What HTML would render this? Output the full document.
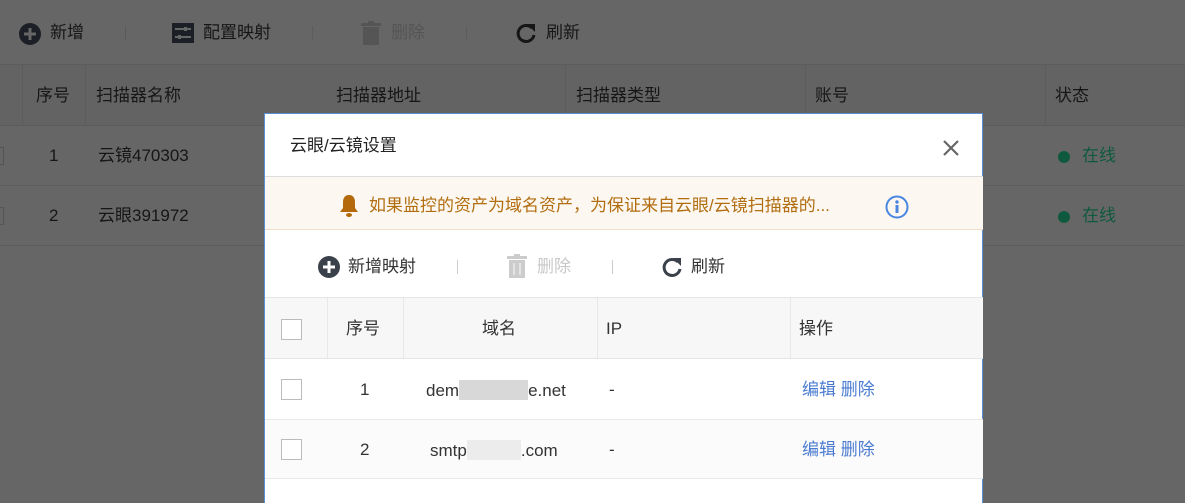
<!DOCTYPE html>
<html><head><meta charset="utf-8"><style>
*{box-sizing:border-box;margin:0;padding:0}
body{width:1185px;height:495px;overflow:hidden;position:relative;background:#666;font-family:"Liberation Sans","Noto Sans CJK SC",sans-serif;font-size:17px;color:#161616}
.a{position:absolute;white-space:nowrap;line-height:20px}
.ln{position:absolute;background:#5c5c5c}
.m{position:absolute;left:264px;top:113px;width:719px;height:390px;background:#fff;border:1px solid #5a8fd8;border-bottom:none;color:#333}
.cb{position:absolute;width:21px;height:21px;border:1px solid #bbb;background:#fff}
.lk{color:#4a7bd0}
</style></head><body>
<svg class="a" style="left:18px;top:22px" width="24" height="24" viewBox="0 0 24 24"><circle cx="12" cy="12" r="11" fill="#1c1f26"/><path d="M12 6v12M6 12h12" stroke="#666" stroke-width="3"/></svg>
<div class="a" style="left:50px;top:23px">新增</div>
<div class="ln" style="left:125px;top:26px;width:1px;height:14px;background:#5a5a5a"></div>
<svg class="a" style="left:172px;top:23px" width="22" height="20" viewBox="0 0 22 20"><rect width="22" height="20" fill="#1c1f26"/><path d="M3 6h16M3 14h16" stroke="#666" stroke-width="2"/><rect x="12" y="4" width="3" height="4" fill="#666"/><rect x="6" y="12" width="3" height="4" fill="#666"/></svg>
<div class="a" style="left:203px;top:23px">配置映射</div>
<div class="ln" style="left:312px;top:26px;width:1px;height:14px"></div>
<svg class="a" style="left:360px;top:21px" width="22" height="24" viewBox="0 0 22 24"><rect x="1" y="2" width="20" height="3" fill="#555"/><rect x="8" y="0" width="6" height="3" fill="#555"/><rect x="3" y="6" width="16" height="18" fill="#555"/></svg>
<div class="a" style="left:391px;top:23px;color:#555">删除</div>
<div class="ln" style="left:466px;top:26px;width:1px;height:14px"></div>
<svg class="a" style="left:515px;top:22px" width="22" height="22" viewBox="0 0 22 22"><path d="M17 6A8 8 0 1 0 19 13" fill="none" stroke="#161616" stroke-width="3"/><path d="M12 2L20 2L20 10Z" fill="#161616"/></svg>
<div class="a" style="left:546px;top:23px">刷新</div>
<div class="a" style="left:0;top:64px;width:1185px;height:62px;background:#636363;border-top:1px solid #5c5c5c;border-bottom:1px solid #5c5c5c"></div>
<div class="ln" style="left:22px;top:65px;width:1px;height:61px"></div>
<div class="ln" style="left:85px;top:65px;width:1px;height:61px"></div>
<div class="ln" style="left:565px;top:65px;width:1px;height:61px"></div>
<div class="ln" style="left:805px;top:65px;width:1px;height:61px"></div>
<div class="ln" style="left:1045px;top:65px;width:1px;height:61px"></div>
<div class="a" style="left:36px;top:86px">序号</div>
<div class="a" style="left:96px;top:86px">扫描器名称</div>
<div class="a" style="left:336px;top:86px">扫描器地址</div>
<div class="a" style="left:576px;top:86px">扫描器类型</div>
<div class="a" style="left:815px;top:86px">账号</div>
<div class="a" style="left:1055px;top:86px">状态</div>
<div class="ln" style="left:0;top:185px;width:1185px;height:1px"></div>
<div class="ln" style="left:0;top:245px;width:1185px;height:1px"></div>
<div class="a" style="left:-14px;top:147px;width:18px;height:18px;border:1px solid #555"></div>
<div class="a" style="left:-14px;top:207px;width:18px;height:18px;border:1px solid #555"></div>
<div class="a" style="left:49px;top:146px">1</div>
<div class="a" style="left:98px;top:146px">云镜470303</div>
<div class="a" style="left:49px;top:206px">2</div>
<div class="a" style="left:98px;top:206px">云眼391972</div>
<div class="a" style="left:1058px;top:151px;width:12px;height:12px;border-radius:50%;background:#0f5a3e"></div>
<div class="a" style="left:1082px;top:146px;color:#0f5a3e">在线</div>
<div class="a" style="left:1058px;top:211px;width:12px;height:12px;border-radius:50%;background:#0f5a3e"></div>
<div class="a" style="left:1082px;top:206px;color:#0f5a3e">在线</div>
<div class="m">
<div class="a" style="left:25px;top:22px;color:#222">云眼/云镜设置</div>
<svg class="a" style="left:677px;top:25px" width="18" height="18" viewBox="0 0 18 18"><path d="M2 2L16 16M16 2L2 16" stroke="#666" stroke-width="2.2"/></svg>
<div class="a" style="left:0;top:62px;width:718px;height:54px;background:#fcf8f1;border-top:1px solid #ddd;border-bottom:1px solid #eedfc8"></div>
<svg class="a" style="left:73px;top:80px" width="22" height="24" viewBox="0 0 22 24"><path d="M11 1c-4 0-6 3-6 7v6l-3 4h18l-3-4V8c0-4-2-7-6-7z" fill="#b46a0c"/><ellipse cx="11" cy="21" rx="3" ry="2" fill="#b46a0c"/></svg>
<div class="a" style="left:104px;top:82px;color:#b26d10">如果监控的资产为域名资产，为保证来自云眼/云镜扫描器的...</div>
<svg class="a" style="left:620px;top:81px" width="24" height="24" viewBox="0 0 24 24"><circle cx="12" cy="12" r="10.5" fill="none" stroke="#4a86e0" stroke-width="2"/><circle cx="12" cy="7" r="1.7" fill="#4a86e0"/><rect x="10.5" y="10" width="3" height="8" fill="#4a86e0"/></svg>
<svg class="a" style="left:52px;top:141px" width="24" height="24" viewBox="0 0 24 24"><circle cx="12" cy="12" r="11" fill="#3b414b"/><path d="M12 6v12M6 12h12" stroke="#fff" stroke-width="3"/></svg>
<div class="a" style="left:83px;top:143px">新增映射</div>
<div class="a" style="left:192px;top:146px;width:1px;height:14px;background:#ccc"></div>
<svg class="a" style="left:241px;top:140px" width="22" height="24" viewBox="0 0 22 24"><rect x="1" y="2" width="20" height="3" fill="#ccc"/><rect x="8" y="0" width="6" height="3" fill="#ccc"/><rect x="3" y="6" width="16" height="18" fill="#ccc"/><path d="M8 9v12M14 9v12" stroke="#e4e4e4" stroke-width="2"/></svg>
<div class="a" style="left:272px;top:143px;color:#c8c8c8">删除</div>
<div class="a" style="left:347px;top:146px;width:1px;height:14px;background:#ccc"></div>
<svg class="a" style="left:396px;top:142px" width="22" height="22" viewBox="0 0 22 22"><path d="M17 6A8 8 0 1 0 19 13" fill="none" stroke="#3b414b" stroke-width="3"/><path d="M12 2L20 2L20 10Z" fill="#3b414b"/></svg>
<div class="a" style="left:426px;top:143px">刷新</div>
<div class="a" style="left:0;top:183px;width:718px;height:62px;background:#f7f7f7;border-top:1px solid #e6e6e6;border-bottom:1px solid #e6e6e6"></div>
<div class="a" style="left:62px;top:184px;width:1px;height:60px;background:#e8e8e8"></div>
<div class="a" style="left:138px;top:184px;width:1px;height:60px;background:#e8e8e8"></div>
<div class="a" style="left:332px;top:184px;width:1px;height:60px;background:#e8e8e8"></div>
<div class="a" style="left:525px;top:184px;width:1px;height:60px;background:#e8e8e8"></div>
<div class="cb" style="left:16px;top:205px"></div>
<div class="a" style="left:81px;top:205px">序号</div>
<div class="a" style="left:217px;top:205px">域名</div>
<div class="a" style="left:341px;top:205px">IP</div>
<div class="a" style="left:534px;top:205px">操作</div>
<div class="a" style="left:0;top:305px;width:718px;height:60px;background:#fbfbfb;border-top:1px solid #e8e8e8;border-bottom:1px solid #e8e8e8"></div>
<div class="cb" style="left:16px;top:265px"></div>
<div class="a" style="left:95px;top:266px">1</div>
<div class="a" style="left:161px;top:266px">dem<span style="display:inline-block;width:69px;height:20px;background:#d8d8d8;vertical-align:-4px"></span>e.net</div>
<div class="a" style="left:344px;top:266px">-</div>
<div class="a lk" style="left:537px;top:266px">编辑 删除</div>
<div class="cb" style="left:16px;top:325px"></div>
<div class="a" style="left:95px;top:326px">2</div>
<div class="a" style="left:165px;top:326px">smtp<span style="display:inline-block;width:54px;height:20px;background:#ececec;vertical-align:-4px"></span>.com</div>
<div class="a" style="left:344px;top:326px">-</div>
<div class="a lk" style="left:537px;top:326px">编辑 删除</div>
</div>
</body></html>
